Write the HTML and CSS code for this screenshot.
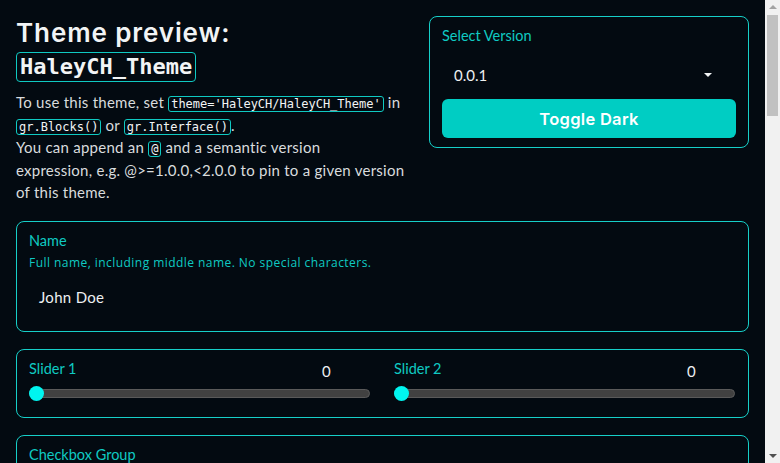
FILE: index.html
```html
<!DOCTYPE html>
<html lang="en">
<head>
    <meta charset="UTF-8">
    <meta name="viewport" content="width=device-width, initial-scale=1.0">
    <title>HaleyCH_Theme</title>
    <link rel="stylesheet" href="styles.css">
</head>
<body>

    <div class="app">
        <div class="top-row">
            <div class="intro">
                <h1>Theme preview: <code class="theme-name">HaleyCH_Theme</code></h1>
                <p>
                    To use this theme, set <code>theme='HaleyCH/HaleyCH_Theme'</code> in
                    <code>gr.Blocks()</code> or <code>gr.Interface()</code>.<br>
                    You can append an <code>@</code> and a semantic version<br>
                    expression, e.g. @&gt;=1.0.0,&lt;2.0.0 to pin to a given version of this theme.
                </p>
            </div>
            <div class="block version-box">
                <span class="label">Select Version</span>
                <div class="select">
                    <span>0.0.1</span>
                    <span class="caret"></span>
                </div>
                <button class="primary">Toggle Dark</button>
            </div>
        </div>

        <div class="block">
            <span class="label">Name</span>
            <span class="info">Full name, including middle name. No special characters.</span>
            <div class="text-input">John Doe</div>
        </div>

        <div class="block slider-row">
            <div class="slider">
                <div class="slider-head">
                    <span class="label">Slider 1</span>
                    <span class="slider-value">0</span>
                </div>
                <div class="track"><span class="thumb"></span></div>
            </div>
            <div class="slider">
                <div class="slider-head">
                    <span class="label">Slider 2</span>
                    <span class="slider-value">0</span>
                </div>
                <div class="track"><span class="thumb"></span></div>
            </div>
        </div>

        <div class="block">
            <span class="label">Checkbox Group</span>
            <div class="options">
                <label class="option"><span class="box"></span>A</label>
                <label class="option"><span class="box"></span>B</label>
                <label class="option"><span class="box"></span>C</label>
            </div>
        </div>

        <div class="block">
            <span class="label">Radio</span>
            <div class="options">
                <label class="option"><span class="box round"></span>A</label>
                <label class="option"><span class="box round"></span>B</label>
                <label class="option"><span class="box round"></span>C</label>
            </div>
        </div>

        <div class="block tall">
            <span class="label">Image</span>
        </div>

        <div class="block tall">
            <span class="label">Chatbot</span>
        </div>

        <div class="block tall">
            <span class="label">Gallery</span>
        </div>

        <div class="buttons">
            <button class="primary">Go</button>
            <button class="secondary">Clear</button>
            <button class="secondary">Reset</button>
        </div>
    </div>

    <!-- page scrollbar, as the browser drew it -->
    <div class="scrollbar">
        <span class="arrow up"></span>
        <div class="scroll-track"><span class="scroll-thumb"></span></div>
        <span class="arrow down"></span>
    </div>

</body>
</html>
```

FILE: styles.css
```css
body {
    margin: 0;
    background-color: #030a11;
    color: #d9dcde;
    font-family: Lato, "Open Sans", sans-serif;
}

.app {
    display: flex;
    flex-direction: column;
    gap: 17px;
    padding: 16px 31px 40px 16px;
}

.top-row {
    display: flex;
    gap: 16px;
    align-items: flex-start;
}

.intro {
    flex: 1;
}

h1 {
    margin: 0;
    font-family: Inter, sans-serif;
    font-size: 26px;
    font-weight: 600;
    line-height: 34px;
    letter-spacing: 0.9px;
    color: #f2f4f5;
}

code {
    font-family: "DejaVu Sans Mono", monospace;
    font-size: 12px;
    line-height: 14px;
    letter-spacing: 0;
    color: #f2f4f5;
    border: 1px solid #0fc9c2;
    border-radius: 3px;
    padding: 0 2px;
}

h1 .theme-name {
    display: block;
    width: fit-content;
    margin-top: 2px;
    font-size: 22px;
    font-weight: bold;
    line-height: 26px;
    padding: 1px 3px;
    border-radius: 4px;
}

.intro p {
    margin: 9px 0 0;
    font-size: 15px;
    line-height: 22.5px;
    letter-spacing: 0.25px;
}

.block {
    display: flex;
    flex-direction: column;
    border: 1px solid #16cfc8;
    border-radius: 8px;
    padding: 10px 12px 12px;
}

.version-box {
    width: 294px;
    padding: 10px 12px 9px;
}

.label {
    color: #0fcac3;
    font-size: 14.5px;
    line-height: 18px;
}

.select {
    display: flex;
    align-items: center;
    justify-content: space-between;
    padding: 21px 24px 15px 12px;
    color: #eef0f1;
    font-size: 15px;
    line-height: 18px;
}

.caret {
    width: 0;
    height: 0;
    border-left: 4px solid transparent;
    border-right: 4px solid transparent;
    border-top: 4px solid #f2f4f5;
}

button {
    font-family: Inter, sans-serif;
    cursor: pointer;
}

.primary {
    height: 39px;
    border: none;
    border-radius: 6px;
    background-color: #00cdc3;
    color: #ffffff;
    font-size: 16.5px;
    font-weight: 600;
    letter-spacing: 0.3px;
}

.info {
    color: #0fcac3;
    font-family: "Open Sans", sans-serif;
    font-size: 12px;
    letter-spacing: 0.45px;
    margin-top: 4px;
}

.text-input {
    padding: 17px 10px 13px;
    color: #eef0f1;
    font-size: 15px;
    letter-spacing: 0.3px;
}

.slider-row {
    flex-direction: row;
    gap: 24px;
    padding: 10px 13px 19px 12px;
}

.slider {
    flex: 1;
}

.slider-head {
    display: flex;
    justify-content: space-between;
}

.slider-value {
    width: 48px;
    margin-top: 2px;
    color: #eef0f1;
    font-size: 15px;
}

.track {
    display: flex;
    align-items: center;
    height: 7px;
    margin-top: 9px;
    background-color: #414141;
    border: 1px solid #5a5a5a;
    border-radius: 5px;
}

.thumb {
    width: 15px;
    height: 15px;
    border-radius: 50%;
    background-color: #00f5f0;
    margin-left: -1px;
}

.options {
    display: flex;
    gap: 16px;
    padding: 12px 0 4px;
}

.option {
    display: flex;
    align-items: center;
    gap: 8px;
    font-size: 14px;
}

.box {
    width: 14px;
    height: 14px;
    border: 1px solid #16cfc8;
    border-radius: 3px;
}

.box.round {
    border-radius: 50%;
}

.tall {
    height: 380px;
}

.buttons {
    display: flex;
    gap: 12px;
}

.buttons button {
    flex: 1;
}

.secondary {
    height: 39px;
    border: 1px solid #16cfc8;
    border-radius: 6px;
    background-color: transparent;
    color: #eef0f1;
    font-size: 16.5px;
    font-weight: 600;
}

.scrollbar {
    position: fixed;
    top: 0;
    right: 0;
    bottom: 0;
    width: 15px;
    display: flex;
    flex-direction: column;
    align-items: center;
    background-color: #f1f1f1;
}

.arrow {
    width: 0;
    height: 0;
    margin: 5px 0;
    border-left: 4px solid transparent;
    border-right: 4px solid transparent;
}

.arrow.up {
    border-bottom: 4px solid #a3a3a3;
}

.arrow.down {
    border-top: 4px solid #505050;
}

.scroll-track {
    flex: 1;
    align-self: stretch;
    padding: 1px 2px;
}

.scroll-thumb {
    display: block;
    height: 101px;
    background-color: #c1c1c1;
}
```
